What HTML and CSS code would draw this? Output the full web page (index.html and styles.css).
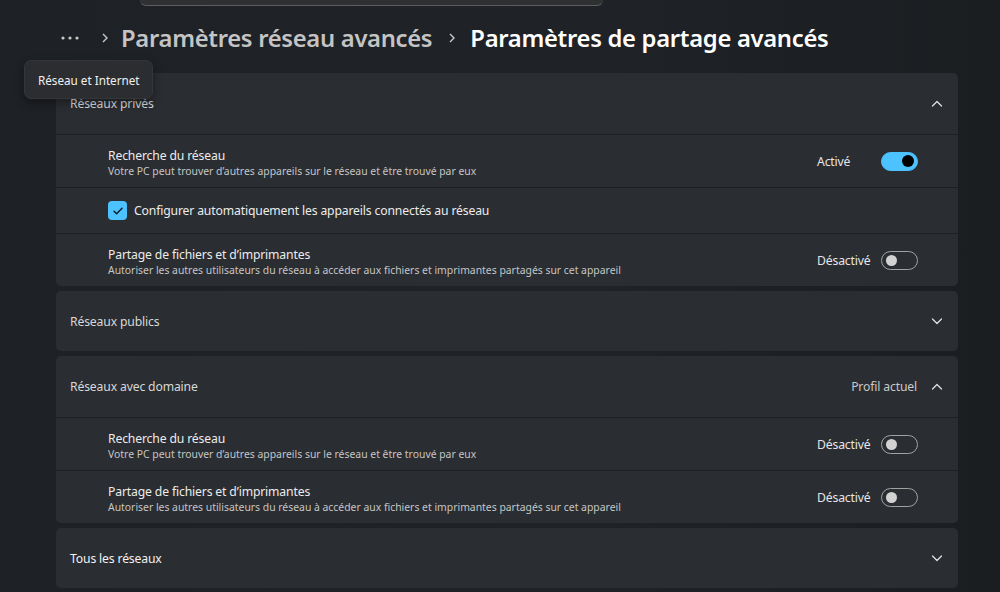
FILE: index.html
```html
<!DOCTYPE html>
<html lang="fr">
<head>
<meta charset="utf-8">
<title>Paramètres de partage avancés</title>
<link rel="stylesheet" href="styles.css">
</head>
<body>
<div class="search"></div>

<nav class="crumbs">
  <span class="more">
    <svg width="20" height="6" viewBox="0 0 20 6"><circle cx="3" cy="3" r="1.6"/><circle cx="10" cy="3" r="1.6"/><circle cx="17" cy="3" r="1.6"/></svg>
  </span>
  <svg class="sep" width="8" height="12" viewBox="0 0 8 12"><path d="M2 2 L6 6 L2 10"/></svg>
  <span class="crumb">Paramètres réseau avancés</span>
  <svg class="sep" width="8" height="12" viewBox="0 0 8 12"><path d="M2 2 L6 6 L2 10"/></svg>
  <span class="crumb current">Paramètres de partage avancés</span>
</nav>

<div class="tooltip">Réseau et Internet</div>

<main class="cards">
  <section class="card">
    <div class="card-head">
      <span class="head-title">Réseaux privés</span>
      <svg class="chev" width="12" height="8" viewBox="0 0 12 8"><path d="M1.5 6 L6 1.5 L10.5 6"/></svg>
    </div>
    <div class="row">
      <div class="texts">
        <div class="title">Recherche du réseau</div>
        <div class="sub">Votre PC peut trouver d’autres appareils sur le réseau et être trouvé par eux</div>
      </div>
      <div class="ctrl"><span class="state">Activé</span><span class="toggle on"><span class="knob"></span></span></div>
    </div>
    <div class="row check-row">
      <span class="checkbox"><svg width="12" height="10" viewBox="0 0 12 10"><path d="M2 5.2 L4.6 7.8 L10 2.2"/></svg></span>
      <span class="check-label">Configurer automatiquement les appareils connectés au réseau</span>
    </div>
    <div class="row">
      <div class="texts">
        <div class="title">Partage de fichiers et d’imprimantes</div>
        <div class="sub">Autoriser les autres utilisateurs du réseau à accéder aux fichiers et imprimantes partagés sur cet appareil</div>
      </div>
      <div class="ctrl"><span class="state">Désactivé</span><span class="toggle"><span class="knob"></span></span></div>
    </div>
  </section>

  <section class="card">
    <div class="card-head">
      <span class="head-title">Réseaux publics</span>
      <svg class="chev" width="12" height="8" viewBox="0 0 12 8"><path d="M1.5 2 L6 6.5 L10.5 2"/></svg>
    </div>
  </section>

  <section class="card">
    <div class="card-head">
      <span class="head-title">Réseaux avec domaine</span>
      <span class="profile">Profil actuel</span>
      <svg class="chev" width="12" height="8" viewBox="0 0 12 8"><path d="M1.5 6 L6 1.5 L10.5 6"/></svg>
    </div>
    <div class="row">
      <div class="texts">
        <div class="title">Recherche du réseau</div>
        <div class="sub">Votre PC peut trouver d’autres appareils sur le réseau et être trouvé par eux</div>
      </div>
      <div class="ctrl"><span class="state">Désactivé</span><span class="toggle"><span class="knob"></span></span></div>
    </div>
    <div class="row">
      <div class="texts">
        <div class="title">Partage de fichiers et d’imprimantes</div>
        <div class="sub">Autoriser les autres utilisateurs du réseau à accéder aux fichiers et imprimantes partagés sur cet appareil</div>
      </div>
      <div class="ctrl"><span class="state">Désactivé</span><span class="toggle"><span class="knob"></span></span></div>
    </div>
  </section>

  <section class="card">
    <div class="card-head">
      <span class="head-title bright">Tous les réseaux</span>
      <svg class="chev" width="12" height="8" viewBox="0 0 12 8"><path d="M1.5 2 L6 6.5 L10.5 2"/></svg>
    </div>
  </section>
</main>
</body>
</html>
```

FILE: styles.css
```css
* { box-sizing: border-box; }

html, body {
  margin: 0;
  height: 100%;
}

body {
  background: linear-gradient(90deg, #1e2125 0%, #1f2226 60%, #1b1e21 100%);
  font-family: "Noto Sans", "Open Sans", sans-serif;
  color: #e8e8e8;
  overflow: hidden;
  position: relative;
}

.search {
  margin-left: 140px;
  width: 463px;
  height: 6px;
  background: #2f3031;
  border-bottom: 1px solid #5c5d5e;
  border-radius: 0 0 7px 7px;
}

.crumbs {
  display: flex;
  align-items: center;
  height: 67px;
  padding-left: 60px;
  padding-bottom: 3px;
}

.more {
  display: flex;
  align-items: center;
  width: 20px;
}
.more svg { fill: #c9c9c9; }

.sep {
  margin: 0 12px 0 21px;
  fill: none;
  stroke: #c9c9c9;
  stroke-width: 1.4;
}
.crumb + .sep { margin-left: 16px; margin-right: 14px; }

.crumb {
  font-size: 23.8px;
  font-weight: 600;
  color: #c4c4c4;
  letter-spacing: -0.3px;
}
.crumb.current { color: #ffffff; }

.tooltip {
  position: absolute;
  left: 24px;
  top: 60px;
  width: 129px;
  height: 39px;
  display: flex;
  align-items: center;
  padding-left: 13px;
  font-size: 11.7px;
  color: #f0f0f0;
  background: #2b2d31;
  border: 1px solid #34363a;
  border-radius: 7px;
  box-shadow: 0 4px 10px rgba(0, 0, 0, 0.35);
  z-index: 2;
}

.cards {
  margin-left: 56px;
  width: 902px;
  display: flex;
  flex-direction: column;
  gap: 5px;
}

.card {
  background: #2a2d31;
  border-radius: 5px;
  overflow: hidden;
}

.card-head {
  height: 61px;
  display: flex;
  align-items: center;
  padding: 0 15px 0 14px;
}
.card:nth-child(2) .card-head,
.card:nth-child(4) .card-head { height: 60px; }

.head-title {
  flex: 1;
  font-size: 12.2px;
  letter-spacing: -0.15px;
  color: #d8d8d8;
}
.head-title.bright { color: #f2f2f2; }

.profile {
  font-size: 12.2px;
  letter-spacing: -0.15px;
  color: #c8c8c8;
  margin-right: 14px;
}

.chev {
  fill: none;
  stroke: #e0e0e0;
  stroke-width: 1.3;
  stroke-linecap: round;
  stroke-linejoin: round;
}

.row {
  display: flex;
  align-items: center;
  height: 53px;
  padding: 0 40px 0 52px;
  border-top: 1px solid #1d2023;
}

.texts {
  flex: 1;
  padding-top: 3px;
}

.title {
  font-size: 12.2px;
  letter-spacing: -0.15px;
  color: #ececec;
  line-height: 16px;
}

.sub {
  font-size: 10.4px;
  color: #c6c6c6;
  line-height: 14px;
}

.ctrl {
  display: flex;
  align-items: center;
}

.state {
  width: 64px;
  font-size: 12.2px;
  letter-spacing: -0.15px;
  color: #e6e6e6;
}

.toggle {
  width: 37px;
  height: 19px;
  border-radius: 10px;
  border: 1px solid #a2a2a2;
  display: flex;
  align-items: center;
  padding: 0 4px;
}
.toggle .knob {
  width: 11px;
  height: 11px;
  border-radius: 50%;
  background: #d2d2d2;
}
.toggle.on {
  background: #4cc2ff;
  border-color: #4cc2ff;
  justify-content: flex-end;
  padding: 0 3px;
}
.toggle.on .knob {
  width: 12px;
  height: 12px;
  background: #000000;
}

.check-row {
  height: 46px;
}

.checkbox {
  width: 19px;
  height: 19px;
  border-radius: 4px;
  background: #4cc2ff;
  display: flex;
  align-items: center;
  justify-content: center;
  margin-right: 7px;
}
.checkbox svg {
  fill: none;
  stroke: #0b1a24;
  stroke-width: 1.4;
  stroke-linecap: round;
  stroke-linejoin: round;
}

.check-label {
  font-size: 12.2px;
  letter-spacing: -0.15px;
  color: #ececec;
}
```
